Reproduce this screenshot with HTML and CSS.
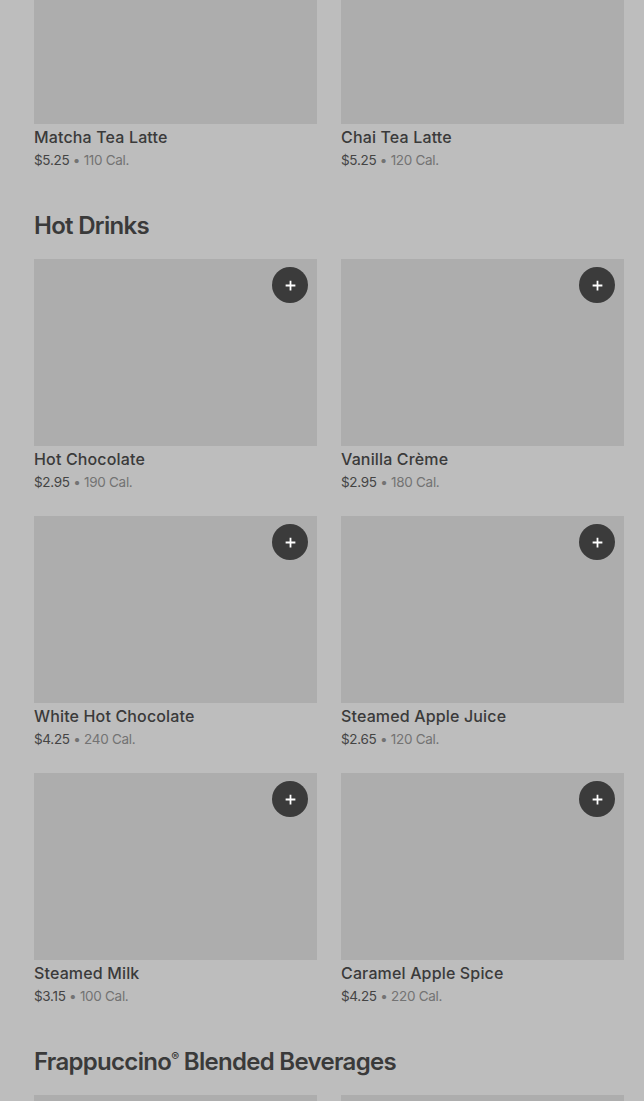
FILE: index.html
```html
<!DOCTYPE html>
<html lang="en">
<head>
  <meta charset="UTF-8">
  <title>Menu</title>
  <link rel="stylesheet" href="styles.css">
</head>
<body>
  <div class="menu">
    <!-- previous section, scrolled past -->
    <div class="grid grid-scrolled">
      <div class="item">
        <div class="thumb"></div>
        <div class="name">Matcha Tea Latte</div>
        <div class="meta"><span class="price">$5.25</span> • <span class="cal">110 Cal.</span></div>
      </div>
      <div class="item">
        <div class="thumb"></div>
        <div class="name">Chai Tea Latte</div>
        <div class="meta"><span class="price">$5.25</span> • <span class="cal">120 Cal.</span></div>
      </div>
    </div>

    <section class="section">
      <h2 class="section-title">Hot Drinks</h2>
      <div class="grid">
        <div class="item">
          <div class="thumb"><button class="add"><svg viewBox="0 0 16 16" width="13" height="13"><path d="M8 2v12M2 8h12" stroke="#fff" stroke-width="2.2"/></svg></button></div>
          <div class="name">Hot Chocolate</div>
          <div class="meta"><span class="price">$2.95</span> • <span class="cal">190 Cal.</span></div>
        </div>
        <div class="item">
          <div class="thumb"><button class="add"><svg viewBox="0 0 16 16" width="13" height="13"><path d="M8 2v12M2 8h12" stroke="#fff" stroke-width="2.2"/></svg></button></div>
          <div class="name">Vanilla Crème</div>
          <div class="meta"><span class="price">$2.95</span> • <span class="cal">180 Cal.</span></div>
        </div>
        <div class="item">
          <div class="thumb"><button class="add"><svg viewBox="0 0 16 16" width="13" height="13"><path d="M8 2v12M2 8h12" stroke="#fff" stroke-width="2.2"/></svg></button></div>
          <div class="name">White Hot Chocolate</div>
          <div class="meta"><span class="price">$4.25</span> • <span class="cal">240 Cal.</span></div>
        </div>
        <div class="item">
          <div class="thumb"><button class="add"><svg viewBox="0 0 16 16" width="13" height="13"><path d="M8 2v12M2 8h12" stroke="#fff" stroke-width="2.2"/></svg></button></div>
          <div class="name">Steamed Apple Juice</div>
          <div class="meta"><span class="price">$2.65</span> • <span class="cal">120 Cal.</span></div>
        </div>
        <div class="item">
          <div class="thumb"><button class="add"><svg viewBox="0 0 16 16" width="13" height="13"><path d="M8 2v12M2 8h12" stroke="#fff" stroke-width="2.2"/></svg></button></div>
          <div class="name">Steamed Milk</div>
          <div class="meta"><span class="price">$3.15</span> • <span class="cal">100 Cal.</span></div>
        </div>
        <div class="item">
          <div class="thumb"><button class="add"><svg viewBox="0 0 16 16" width="13" height="13"><path d="M8 2v12M2 8h12" stroke="#fff" stroke-width="2.2"/></svg></button></div>
          <div class="name">Caramel Apple Spice</div>
          <div class="meta"><span class="price">$4.25</span> • <span class="cal">220 Cal.</span></div>
        </div>
      </div>
    </section>

    <section class="section">
      <h2 class="section-title">Frappuccino<sup>®</sup> Blended Beverages</h2>
      <div class="grid">
        <div class="item"><div class="thumb"></div></div>
        <div class="item"><div class="thumb"></div></div>
      </div>
    </section>
  </div>
</body>
</html>
```

FILE: styles.css
```css
:root {
  --page-bg: #bdbdbd;
  --thumb-bg: #adadad;
  --text-dark: #3a3a3a;
  --text-muted: #737373;
  --button-bg: #3b3b3b;
}

body {
  margin: 0;
  background: var(--page-bg);
  font-family: Inter, "Liberation Sans", sans-serif;
  color: var(--text-dark);
  overflow: hidden;
}

/* メニュー全体 */
.menu {
  padding: 0 20px 0 34px;
}

.grid {
  display: grid;
  grid-template-columns: 1fr 1fr;
  column-gap: 24px;
  row-gap: 24px;
}

.grid-scrolled {
  margin-top: -63px;
}

/* 商品カード */
.thumb {
  position: relative;
  height: 187px;
  background: var(--thumb-bg);
}

.name {
  margin-top: 1px;
  font-size: 16px;
  font-weight: 500;
  line-height: 24px;
  letter-spacing: 0.15px;
}

.meta {
  margin-top: 1px;
  font-size: 13.5px;
  line-height: 20px;
  letter-spacing: -0.3px;
  color: var(--text-muted);
}

.price {
  color: #444;
}

/* 追加ボタン */
.add {
  position: absolute;
  top: 8px;
  right: 9px;
  width: 36px;
  height: 36px;
  padding: 0;
  border: none;
  border-radius: 50%;
  background: var(--button-bg);
  display: flex;
  align-items: center;
  justify-content: center;
}

/* セクション見出し */
.section {
  margin-top: 40px;
}

.section-title {
  margin: 0 0 17px;
  font-size: 24px;
  font-weight: 600;
  line-height: 32px;
  letter-spacing: -0.7px;
}

.section-title sup {
  font-size: 12px;
  line-height: 0;
  vertical-align: 9px;
}
```
